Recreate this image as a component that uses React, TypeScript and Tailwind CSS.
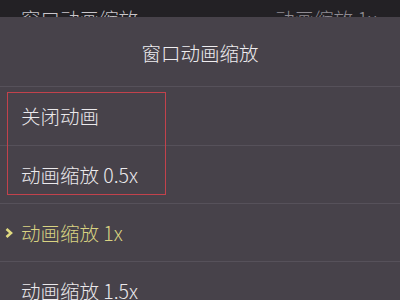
import React from "react";

const options = [
  { label: "关闭动画", active: false },
  { label: "动画缩放 0.5x", active: false },
  { label: "动画缩放 1x", active: true },
  { label: "动画缩放 1.5x", active: false },
];

export default function App() {
  return (
    <div
      className="relative w-[400px] h-[300px] overflow-hidden bg-[#232125] font-light"
      style={{ fontFamily: '"Noto Sans CJK SC", "Noto Sans", sans-serif' }}
    >
      {/* Settings row behind the sheet */}
      <div className="flex items-center justify-between pl-[21px] pr-[4px] pt-[7px] text-[19.5px] leading-[24px] text-[#c9c6cb]">
        <span>窗口动画缩放</span>
        <div className="flex items-center gap-[14px] text-[#8f8b92]">
          <span>动画缩放 1x</span>
          <span className="text-[18px]">›</span>
        </div>
      </div>

      {/* Option sheet */}
      <div className="absolute left-0 right-0 top-[17px] bottom-0 bg-[#47424a]">
        <div className="h-[70px] flex items-center justify-center pt-[3px] border-b border-[#56515a] text-[19.5px] text-[#efedf0]">
          窗口动画缩放
        </div>
        {options.map((o, i) => (
          <div
            key={o.label}
            className={`relative flex items-center pl-[21px] border-b border-[#56515a] text-[19.5px] ${i === 0 ? "h-[59px]" : "h-[58px]"}`}
          >
            {o.active && (
              <svg
                className="absolute left-[5px] top-1/2 -translate-y-1/2"
                width="8"
                height="11"
                viewBox="0 0 8 11"
              >
                <path d="M1.5 1.5 L6 5.5 L1.5 9.5" fill="none" stroke="#e0da80" strokeWidth="2.6" />
              </svg>
            )}
            <span className={o.active ? "text-[#d9d382]" : "text-[#ebe9ec]"}>{o.label}</span>
          </div>
        ))}
        {/* highlight box */}
        <div className="absolute left-[7px] top-[75px] w-[159px] h-[103px] border border-[#c2424c]" />
      </div>
    </div>
  );
}
